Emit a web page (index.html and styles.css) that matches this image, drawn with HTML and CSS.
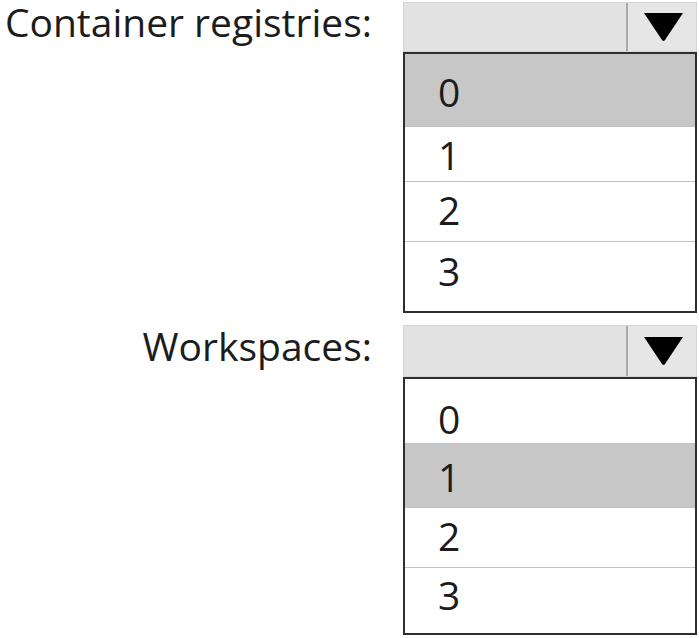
FILE: index.html
```html
<!DOCTYPE html>
<html>
<head>
<meta charset="utf-8">
<link rel="stylesheet" href="styles.css">
</head>
<body>
<div class="form">
  <div class="field field-a">
    <div class="label">Container registries:</div>
    <div class="dropdown">
      <div class="head">
        <div class="value"></div>
        <div class="btn">
          <svg width="41" height="30" viewBox="0 0 41 30"><path d="M1 1 H40 L22 28 Q20.5 30 19 28 Z" fill="#000"/></svg>
        </div>
      </div>
      <div class="list">
        <div class="opt sel">0</div>
        <div class="opt">1</div>
        <div class="opt">2</div>
        <div class="opt">3</div>
      </div>
    </div>
  </div>
  <div class="field field-b">
    <div class="label">Workspaces:</div>
    <div class="dropdown">
      <div class="head">
        <div class="value"></div>
        <div class="btn">
          <svg width="41" height="30" viewBox="0 0 41 30"><path d="M1 1 H40 L22 28 Q20.5 30 19 28 Z" fill="#000"/></svg>
        </div>
      </div>
      <div class="list">
        <div class="opt">0</div>
        <div class="opt sel">1</div>
        <div class="opt">2</div>
        <div class="opt">3</div>
      </div>
    </div>
  </div>
</div>
</body>
</html>
```

FILE: styles.css
```css
html, body {
  margin: 0;
  padding: 0;
  background: #fff;
}
body {
  font-family: "Open Sans", "Noto Sans", sans-serif;
  color: #1c1c1c;
}
.form {
  display: flex;
  flex-direction: column;
  gap: 10px;
}
.field {
  display: grid;
  grid-template-columns: 372px 294px;
  column-gap: 31px;
  align-items: start;
}
.label {
  text-align: right;
  font-size: 39px;
  line-height: 44px;
  white-space: nowrap;
}
.field-b .label { padding-top: 1px; }
.dropdown {
  display: flex;
  flex-direction: column;
  padding-top: 2px;
}
.head {
  display: flex;
  height: 50px;
  background: #e2e2e2;
  box-sizing: border-box;
  border: 1px solid #d6d6d6;
}
.field-b .head { height: 52px; }
.value { flex: 1; }
.btn {
  width: 66px;
  border-left: 2px solid #a9a9a9;
  background: #e6e6e6;
  display: flex;
  align-items: center;
  justify-content: center;
  padding-left: 2px;
}
.list {
  border: 2px solid #2e2e2e;
  background: #fff;
}
.opt {
  box-sizing: border-box;
  font-size: 39px;
  line-height: 40px;
  padding-left: 33px;
}
.opt + .opt { border-top: 1px solid #c2c2c2; }
.opt.sel { background: #c7c7c7; }

.field-a .opt:nth-child(1) { height: 72px; padding-top: 18px; }
.field-a .opt:nth-child(2) { height: 55px; padding-top: 8px; }
.field-a .opt:nth-child(3) { height: 60px; padding-top: 8px; }
.field-a .opt:nth-child(4) { height: 70px; padding-top: 9px; }

.field-b .opt:nth-child(1) { height: 64px; padding-top: 20px; }
.field-b .opt:nth-child(2) { height: 64px; padding-top: 13px; }
.field-b .opt:nth-child(3) { height: 60px; padding-top: 8px; }
.field-b .opt:nth-child(4) { height: 66px; padding-top: 7px; }
```
